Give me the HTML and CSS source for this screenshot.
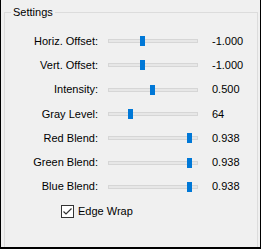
FILE: index.html
```html
<!DOCTYPE html>
<html lang="en">
<head>
	<meta charset="UTF-8">
	<title>Settings</title>
	<link rel="stylesheet" href="styles.css">
</head>
<body>
	<div class="window">
		<fieldset class="group">
			<legend>Settings</legend>
			<div class="rows">
				<div class="row">
					<span class="label">Horiz. Offset:</span>
					<div class="slider"><div class="track"></div><div class="thumb" style="left:32px"></div></div>
					<span class="value">-1.000</span>
				</div>
				<div class="row">
					<span class="label">Vert. Offset:</span>
					<div class="slider"><div class="track"></div><div class="thumb" style="left:32px"></div></div>
					<span class="value">-1.000</span>
				</div>
				<div class="row">
					<span class="label">Intensity:</span>
					<div class="slider"><div class="track"></div><div class="thumb" style="left:42px"></div></div>
					<span class="value">0.500</span>
				</div>
				<div class="row">
					<span class="label">Gray Level:</span>
					<div class="slider"><div class="track"></div><div class="thumb" style="left:20px"></div></div>
					<span class="value">64</span>
				</div>
				<div class="row">
					<span class="label">Red Blend:</span>
					<div class="slider"><div class="track"></div><div class="thumb" style="left:79px"></div></div>
					<span class="value">0.938</span>
				</div>
				<div class="row">
					<span class="label">Green Blend:</span>
					<div class="slider"><div class="track"></div><div class="thumb" style="left:79px"></div></div>
					<span class="value">0.938</span>
				</div>
				<div class="row">
					<span class="label">Blue Blend:</span>
					<div class="slider"><div class="track"></div><div class="thumb" style="left:79px"></div></div>
					<span class="value">0.938</span>
				</div>
				<div class="check-row">
					<span class="checkbox">
						<svg width="11" height="11" viewBox="0 0 11 11"><path d="M1.5 5.5 L4 8 L9.5 2.5" fill="none" stroke="#333" stroke-width="1.2"/></svg>
					</span>
					<span class="check-label">Edge Wrap</span>
				</div>
			</div>
		</fieldset>
	</div>
</body>
</html>
```
FILE: styles.css
```css
*{
	margin: 0;
	padding: 0;
	box-sizing: border-box;
}
body{
	background: #f0f0f0;
	font-family: "Liberation Sans", Arial, sans-serif;
	font-size: 11px;
	color: #000;
}
.window{
	width: 261px;
	height: 249px;
	background: #f0f0f0;
	border-left: 1px solid #000;
	border-right: 1px solid #000;
	border-bottom: 2px solid #000;
	padding: 0 2px 0 3px;
	overflow: hidden;
}
.group{
	width: 254px;
	height: 260px;
	border: 1px solid #dcdcdc;
	margin-top: 6px;
	min-width: 0;
}
.group legend{
	margin-left: 6px;
	padding: 0 2px;
	line-height: 13px;
}
.rows{
	padding-top: 10px;
}
.row{
	display: flex;
	align-items: center;
	height: 24.3px;
}
.label{
	width: 93px;
	text-align: right;
	line-height: 13px;
}
.slider{
	position: relative;
	width: 90px;
	height: 10px;
	margin-left: 10px;
	display: flex;
	align-items: center;
}
.track{
	width: 90px;
	height: 4px;
	background: #e7e7e7;
	border: 1px solid #d6d6d6;
}
.thumb{
	position: absolute;
	top: 0;
	width: 5px;
	height: 10px;
	background: #0078d7;
}
.value{
	margin-left: 14px;
	line-height: 13px;
}
.check-row{
	display: flex;
	align-items: center;
	height: 24px;
	padding-left: 56px;
}
.checkbox{
	width: 13px;
	height: 13px;
	border: 1px solid #333;
	background: #fff;
	display: flex;
	align-items: center;
	justify-content: center;
}
.check-label{
	margin-left: 4px;
	line-height: 13px;
}
```
